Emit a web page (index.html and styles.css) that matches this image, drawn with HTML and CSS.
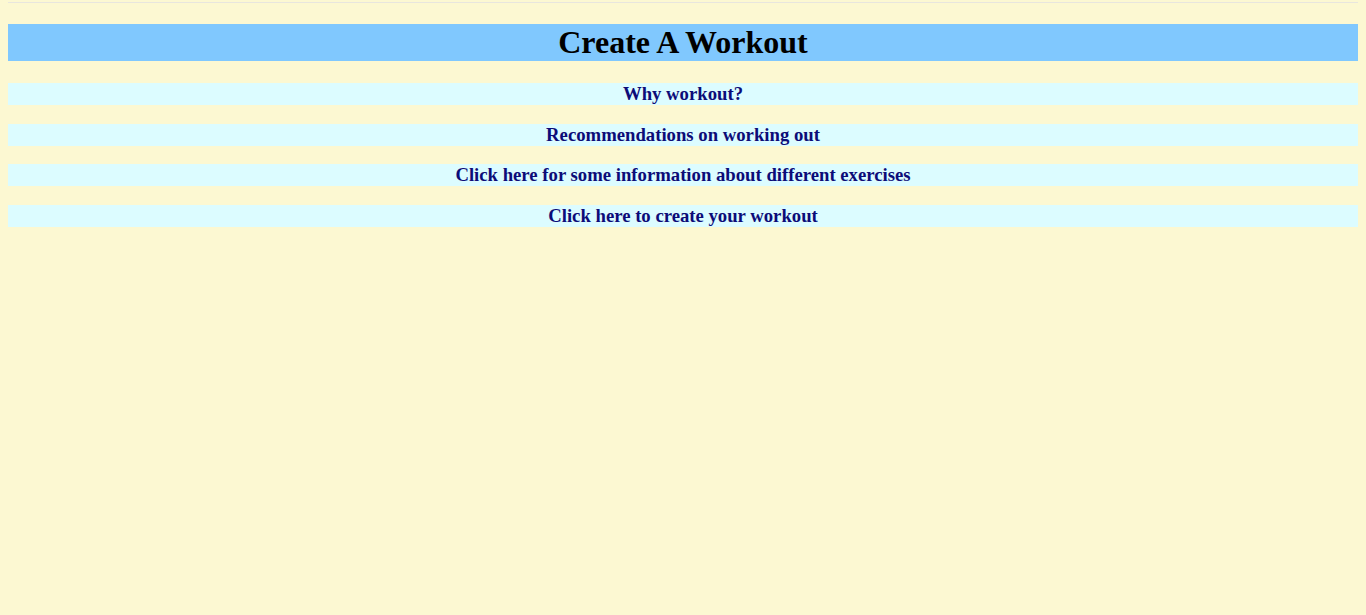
FILE: index.html
```html
<!DOCTYPE html>
<html>
<head>
<meta charset="utf-8">
<title>Create A Workout</title>
<link rel="stylesheet" href="styles.css">
</head>
<body>
<h1 class="title">Create A Workout</h1>
<h3 class="item"><a class="item-link" href="#">Why workout?</a></h3>
<h3 class="item"><a class="item-link" href="#">Recommendations on working out</a></h3>
<h3 class="item"><a class="item-link" href="#">Click here for some information about different exercises</a></h3>
<h3 class="item"><a class="item-link" href="#">Click here to create your workout</a></h3>
</body>
</html>
```
FILE: styles.css
```css
html {
  background: #fcf8d2;
}
body {
  margin: 2px 8px 8px;
  border-top: 1px solid #e8e6de;
  font-family: "Liberation Serif", "Times New Roman", serif;
}
.title {
  margin: 21px 0 22px;
  font-size: 32px;
  font-weight: bold;
  text-align: center;
  background: #80c8fe;
  color: #000;
}
.item {
  margin: 18.72px 0;
  font-size: 18.72px;
  font-weight: bold;
  text-align: center;
  background: #dcfcff;
}
.item-link {
  color: #0c0c78;
  text-decoration: none;
}
```
